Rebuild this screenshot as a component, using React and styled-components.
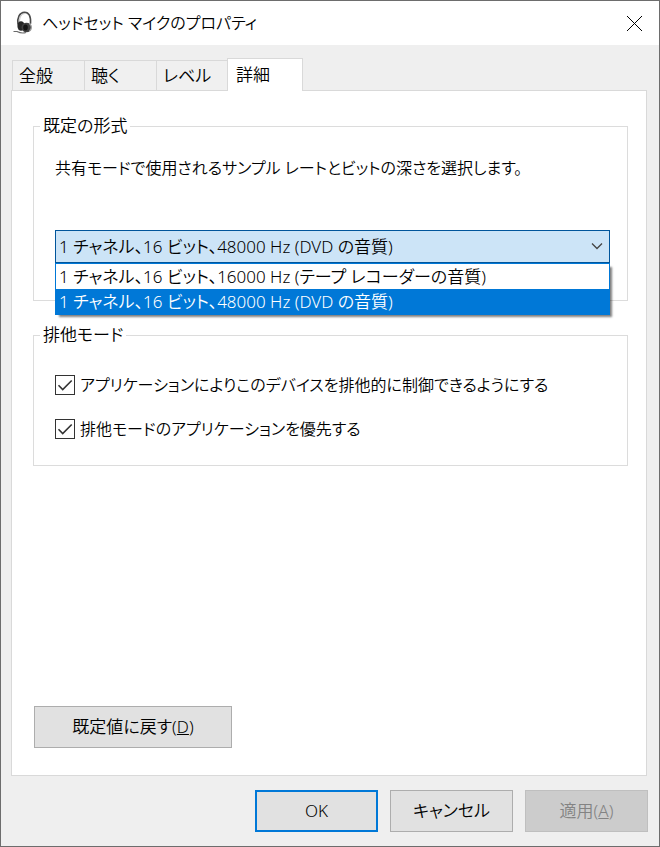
import React, { useState } from 'react';
import styled, { createGlobalStyle } from 'styled-components';

const tabs = [
    { id: 'general', label: '全般' },
    { id: 'listen', label: '聴く' },
    { id: 'levels', label: 'レベル' },
    { id: 'advanced', label: '詳細' },
];

const formats = [
    { id: '16000', label: '1 チャネル、16 ビット、16000 Hz (テープ レコーダーの音質)' },
    { id: '48000', label: '1 チャネル、16 ビット、48000 Hz (DVD の音質)' },
];

const GlobalStyle = createGlobalStyle`
    * {
        box-sizing: border-box;
    }

    body {
        margin: 0;
    }

    body, button, select, input {
        font-family: 'Noto Sans', 'Noto Sans CJK JP', sans-serif;
        font-size: 17px;
        font-weight: 350;
        font-feature-settings: 'palt';
        line-height: 24px;
        color: #000;
    }
`;

const Dialog = styled.main`
    display: flex;
    flex-direction: column;
    min-height: 100vh;
    border: 1px solid #6d6d6d;
    background: #efefef;
`;

const TitleBar = styled.header`
    display: flex;
    align-items: center;
    height: 44px;
    padding: 0 16px 0 12px;
    background: #fff;
`;

const Title = styled.h1`
    flex: 1;
    margin: 0 0 0 8px;
    font-size: 16px;
    font-weight: 350;
`;

const CloseButton = styled.button`
    display: flex;
    padding: 0;
    border: 0;
    background: none;
`;

const TabList = styled.div`
    display: flex;
    align-items: flex-end;
    height: 45px;
    padding-left: 11px;
`;

const Tab = styled.button`
    width: ${({ $active }) => ($active ? '76px' : '72px')};
    height: ${({ $active }) => ($active ? '33px' : '30px')};
    margin-left: ${({ $active }) => ($active ? '-1px' : '0')};
    margin-bottom: ${({ $active }) => ($active ? '-1px' : '0')};
    padding: 0 0 0 ${({ $active }) => ($active ? '8px' : '6px')};
    border: 1px solid #d9d9d9;
    border-right-width: ${({ $active }) => ($active ? '1px' : '0')};
    border-bottom: 0;
    background: ${({ $active }) => ($active ? '#fff' : '#f0f0f0')};
    text-align: left;
    z-index: ${({ $active }) => ($active ? 1 : 0)};
`;

const Panel = styled.section`
    display: flex;
    flex: 1;
    flex-direction: column;
    margin: 0 12px 0 10px;
    padding: 23px 18px 27px 21px;
    border: 1px solid #d9d9d9;
    background: #fff;
`;

const Group = styled.fieldset`
    min-width: 0;
    margin: 0 0 22px;
    padding: ${({ $compact }) => ($compact ? '26px 17px 24px 21px' : '18px 17px 37px 21px')};
    border: 1px solid #dcdcdc;
`;

const Legend = styled.legend`
    margin-left: -15px;
    padding: 0 3px;
`;

const Description = styled.label`
    display: block;
    margin-bottom: 50px;
    font-size: 16px;
`;

const ComboBox = styled.div`
    position: relative;
`;

const Select = styled.select`
    display: block;
    width: 100%;
    height: 33px;
    padding: 0 28px 0 3px;
    border: 1px solid #00559b;
    border-radius: 0;
    outline: 0;
    background: #cce4f7;
    appearance: none;
`;

const ComboArrow = styled.svg`
    position: absolute;
    top: 12px;
    right: 7px;
    pointer-events: none;
`;

const OptionList = styled.ul`
    position: absolute;
    top: 33px;
    left: 0;
    right: 0;
    margin: 0;
    padding: 0;
    border: 1px solid #0078d7;
    background: #fff;
    box-shadow: 3px 3px 2px -1px rgba(0, 0, 0, 0.5);
    list-style: none;
`;

const Option = styled.li`
    height: 25px;
    padding-left: 3px;
    background: ${({ $selected }) => ($selected ? '#0078d7' : '#fff')};
    color: ${({ $selected }) => ($selected ? '#fff' : '#000')};
    line-height: 26px;
    white-space: nowrap;
`;

const CheckRow = styled.label`
    display: flex;
    align-items: center;
    gap: 5px;
    height: 24px;
    font-size: 16px;

    & + & {
        margin-top: 20px;
    }
`;

const CheckMark = styled.span`
    display: grid;
    width: 20px;
    height: 20px;

    & > * {
        grid-area: 1 / 1;
    }
`;

const Checkbox = styled.input`
    width: 20px;
    height: 20px;
    margin: 0;
    border: 1px solid #333;
    background: #fff;
    appearance: none;

    &:not(:checked) + svg {
        visibility: hidden;
    }
`;

const PushButton = styled.button`
    width: ${({ $wide }) => ($wide ? '198px' : '123px')};
    height: 42px;
    padding: 0;
    border: ${({ $primary }) => ($primary ? '2px solid #0078d7' : '1px solid #adadad')};
    background: #e1e1e1;

    &:disabled {
        border-color: #bfbfbf;
        background: #ccc;
        color: #838383;
    }
`;

const PanelActions = styled.div`
    margin-top: auto;
    padding-left: 1px;
`;

const Footer = styled.footer`
    display: flex;
    justify-content: flex-end;
    gap: 12px;
    padding: 14px 11px;
`;

const HeadsetIcon = () => (
    <svg width="21" height="24" viewBox="0 0 21 24" aria-hidden="true">
        <path d="M5 13.500C4 6.500 6.500 1.600 11.500 1.300c4.500 0 6.500 4 6 11.500" fill="none" stroke="#4a4a4a" strokeWidth="1.600" />
        <path d="M6.500 11C6.500 6 8.500 2.800 11.500 2.700" fill="none" stroke="#b5b5b5" strokeWidth="0.800" />
        <ellipse cx="8" cy="15" rx="3.600" ry="4.800" fill="#262626" />
        <ellipse cx="13.500" cy="16.500" rx="5" ry="4.800" fill="#404040" />
        <ellipse cx="12.500" cy="16.500" rx="2.300" ry="3" fill="#151515" />
        <path d="M16.500 13c2.500 1.500 2.500 5 0 7" fill="none" stroke="#a0a0a0" strokeWidth="1.200" />
        <path d="M0.500 20.500h3.500c3 1.500 6 2 9 1" fill="none" stroke="#6a6a6a" strokeWidth="1.200" />
    </svg>
);

const CheckOption = ({ children }) => {
    const [checked, setChecked] = useState(true);

    return (
        <CheckRow>
            <CheckMark>
                <Checkbox type="checkbox" checked={checked} onChange={() => setChecked(!checked)} />
                <svg width="20" height="20" viewBox="0 0 20 20" aria-hidden="true">
                    <path d="M3.500 10.300l4.200 4.200 9-9" fill="none" stroke="#333" strokeWidth="1.600" />
                </svg>
            </CheckMark>
            {children}
        </CheckRow>
    );
};

const App = () => {
    const [format, setFormat] = useState('48000');

    return (
        <Dialog>
            <GlobalStyle />
            <TitleBar>
                <HeadsetIcon />
                <Title>ヘッドセット マイクのプロパティ</Title>
                <CloseButton type="button" aria-label="閉じる">
                    <svg width="17" height="17" viewBox="0 0 17 17">
                        <path d="M1 1l15 15M16 1L1 16" stroke="#000" strokeWidth="1" />
                    </svg>
                </CloseButton>
            </TitleBar>
            <TabList role="tablist">
                {tabs.map((tab) => (
                    <Tab key={tab.id} type="button" role="tab" aria-selected={tab.id === 'advanced'} $active={tab.id === 'advanced'}>
                        {tab.label}
                    </Tab>
                ))}
            </TabList>
            <Panel role="tabpanel">
                <Group>
                    <Legend>既定の形式</Legend>
                    <Description htmlFor="format">
                        共有モードで使用されるサンプル レートとビットの深さを選択します。
                    </Description>
                    <ComboBox>
                        <Select id="format" value={format} onChange={(e) => setFormat(e.target.value)}>
                            {formats.map((item) => (
                                <option key={item.id} value={item.id}>{item.label}</option>
                            ))}
                        </Select>
                        <ComboArrow width="12" height="8" viewBox="0 0 12 8" aria-hidden="true">
                            <path d="M1 1.500l5 5 5-5" fill="none" stroke="#444" strokeWidth="1.300" />
                        </ComboArrow>
                        <OptionList role="listbox">
                            {formats.map((item) => (
                                <Option
                                    key={item.id}
                                    role="option"
                                    aria-selected={item.id === format}
                                    $selected={item.id === format}
                                    onClick={() => setFormat(item.id)}
                                >
                                    {item.label}
                                </Option>
                            ))}
                        </OptionList>
                    </ComboBox>
                </Group>
                <Group $compact>
                    <Legend>排他モード</Legend>
                    <CheckOption>アプリケーションによりこのデバイスを排他的に制御できるようにする</CheckOption>
                    <CheckOption>排他モードのアプリケーションを優先する</CheckOption>
                </Group>
                <PanelActions>
                    <PushButton type="button" $wide>既定値に戻す(<u>D</u>)</PushButton>
                </PanelActions>
            </Panel>
            <Footer>
                <PushButton type="button" $primary>OK</PushButton>
                <PushButton type="button">キャンセル</PushButton>
                <PushButton type="button" disabled>適用(<u>A</u>)</PushButton>
            </Footer>
        </Dialog>
    );
};

export default App;
